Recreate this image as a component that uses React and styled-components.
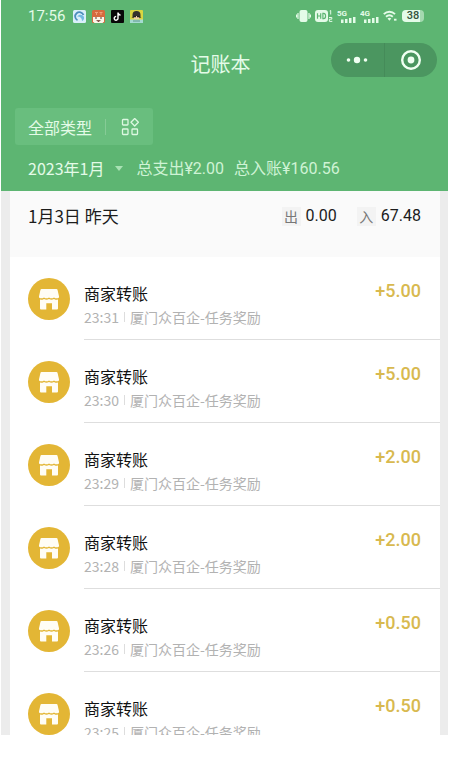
import React from "react";
import styled, { createGlobalStyle } from "styled-components";

const GlobalStyle = createGlobalStyle`
  * { box-sizing: border-box; }
  body {
    margin: 0;
    background: #ffffff;
    color: #1c1c1c;
    font-family: "Noto Sans CJK SC", sans-serif;
  }
  button { border: 0; padding: 0; background: none; color: inherit; font: inherit; cursor: pointer; }
  ul { margin: 0; padding: 0; list-style: none; }
  svg { display: block; flex: none; }
`;

const Screen = styled.div`
  display: flex;
  flex-direction: column;
  height: calc(100vh - 23px);
  margin: 0 7px 0 1px;
  overflow: hidden;
  background: #ececec;
`;

const Header = styled.header`
  flex: none;
  background: #5db572;
  color: #e4fbe8;
`;

const StatusBar = styled.div`
  display: flex;
  align-items: center;
  justify-content: space-between;
  height: 32px;
  padding: 0 24px 0 27px;
`;

const StatusGroup = styled.div`
  display: flex;
  align-items: center;
  gap: ${(p) => p.$gap}px;
`;

const Clock = styled.time`
  margin-right: 2px;
  font: 15px/20px Roboto, sans-serif;
`;

const Battery = styled.span`
  width: 22px;
  margin-left: 1px;
  border-radius: 4px;
  background: linear-gradient(90deg, #e4fbe8 84%, #a4d9b0 84%);
  color: #35533c;
  font: 500 11px/12px Roboto, sans-serif;
  text-align: center;
`;

const TitleBar = styled.div`
  display: grid;
  grid-template-columns: 1fr auto 1fr;
  align-items: center;
  height: 56px;
  padding: 0 11px;
`;

const Title = styled.h1`
  grid-column: 2;
  margin: 0;
  padding-top: 8px;
  padding-right: 8px;
  font-size: 20px;
  font-weight: 400;
  line-height: 28px;
`;

const Capsule = styled.div`
  display: flex;
  justify-self: end;
  width: 106px;
  height: 34px;
  border-radius: 17px;
  background: #4b9660;
`;

const CapsuleButton = styled.button`
  display: flex;
  flex: 1;
  align-items: center;
  justify-content: center;
  & + & { border-left: 1px solid #458b59; }
`;

const Filters = styled.div`
  padding: 20px 14px 0;
`;

const TypeButton = styled.button`
  display: flex;
  align-items: center;
  height: 37px;
  padding: 0 14px 0 13px;
  border-radius: 3px;
  background: #69be7e;
  font-size: 16px;
  line-height: 24px;
`;

const TypeLabel = styled.span`
  margin-right: 15px;
  padding-right: 13px;
  border-right: 1px solid #86cb96;
  line-height: 16px;
`;

const MonthRow = styled.div`
  display: flex;
  align-items: center;
  height: 46px;
  padding: 0 27px;
  font-size: 16px;
  line-height: 24px;
  white-space: nowrap;
`;

const MonthButton = styled.button`
  display: flex;
  align-items: center;
  gap: 11px;
  margin-right: 13px;
`;

const Total = styled.span`
  margin-right: 10px;
  color: #cff3d5;
`;

const Figure = styled.span`
  font-family: Roboto, sans-serif;
`;

const Ledger = styled.main`
  flex: 1;
  min-height: 0;
  margin: 0 8px 0 9px;
  overflow: hidden;
  background: #ffffff;
`;

const DayHeader = styled.div`
  display: flex;
  align-items: flex-start;
  justify-content: space-between;
  height: 66px;
  padding: 12px 19px 0 18px;
  background: #fafafa;
`;

const DayTitle = styled.h2`
  margin: 0;
  font-size: 17px;
  font-weight: 400;
  line-height: 26px;
`;

const DaySums = styled.div`
  display: flex;
  gap: 20px;
`;

const Sum = styled.div`
  display: flex;
  align-items: center;
  gap: 5px;
  font: 16px/26px Roboto, sans-serif;
`;

const SumTag = styled.span`
  width: 19px;
  background: #f3f3f3;
  color: #777777;
  font: 14px/19px "Noto Sans CJK SC", sans-serif;
  text-align: center;
`;

const Row = styled.li`
  display: flex;
  gap: 14px;
  height: 83px;
  padding-left: 18px;
`;

const ShopBadge = styled.span`
  display: flex;
  flex: none;
  align-items: center;
  justify-content: center;
  width: 42px;
  height: 42px;
  margin-top: 21px;
  border-radius: 50%;
  background: #e3b635;
`;

const RowBody = styled.div`
  display: flex;
  flex: 1;
  align-items: flex-start;
  justify-content: space-between;
  padding: 24px 19px 0 0;
  border-bottom: 1px solid #dedede;
`;

const Name = styled.div`
  font-size: 16px;
  line-height: 24px;
  color: #111111;
`;

const Detail = styled.div`
  display: flex;
  align-items: center;
  gap: 5px;
  color: #b2b2b2;
  font-size: 14px;
  line-height: 24px;
`;

const Divider = styled.span`
  width: 1px;
  height: 10px;
  background: #dddddd;
`;

const Amount = styled.div`
  color: #d8b94f;
  font: 500 18px/20px Roboto, sans-serif;
`;

const entries = [
  { time: "23:31", amount: "+5.00" },
  { time: "23:30", amount: "+5.00" },
  { time: "23:29", amount: "+2.00" },
  { time: "23:28", amount: "+2.00" },
  { time: "23:26", amount: "+0.50" },
  { time: "23:25", amount: "+0.50" },
];

const BrowserIcon = () => (
  <svg width="13" height="13" viewBox="0 0 13 13">
    <rect width="13" height="13" rx="1.5" fill="#d9effa" />
    <path d="M4.500 10.300A4.300 4.300 0 1 1 10.500 5" fill="none" stroke="#4b8dbd" strokeWidth="1.8" />
    <path d="M4.200 6.500C6 4 9.500 4.200 11 7c.4 2-.5 3.500-2 4 .2-2.500-1.500-4.500-4.800-4.500Z" fill="#73b9e2" />
  </svg>
);

const MascotIcon = () => (
  <svg width="13" height="13" viewBox="0 0 13 13">
    <rect width="13" height="13" rx="1.5" fill="#d66a3e" />
    <path d="M3 2.500h3M4.500 2v3M7.500 2.500h3M9 2v3" stroke="#f0a17a" />
    <path d="M1 7h11v4.500L10.500 13h-8L1 11.500Z" fill="#fbf5e8" />
    <path d="M3 8h2M8 8h2" stroke="#5b392d" strokeWidth="1.2" />
    <path d="M4 10.200h5L6.500 12Z" fill="#6b2a24" />
  </svg>
);

const MusicIcon = () => (
  <svg width="13" height="13" viewBox="0 0 13 13">
    <rect width="13" height="13" rx="1" fill="#080808" />
    <path d="M7 2.500v5.700A1.900 1.900 0 1 1 5.200 6.400M7 2.700c.2 1.500 1.100 2.300 2.600 2.400" fill="none" stroke="#ffffff" strokeWidth="1.4" />
  </svg>
);

const AvatarIcon = () => (
  <svg width="13" height="13" viewBox="0 0 13 13">
    <rect width="13" height="13" rx="1" fill="#d9d640" />
    <path d="M2.500 7V5a4 4 0 0 1 8 0v2l1 .8h-10Z" fill="#34332c" />
    <path d="M4 6h5v3H4Z" fill="#f0d3a6" />
    <path d="M3.500 6h2.500v1.300H3.500ZM7 6h2.500v1.300H7Z" fill="#24241f" />
    <path d="M0 9.500h13V13H0Z" fill="#a6dbd1" />
    <path d="M3 11h7" stroke="#5f968f" />
  </svg>
);

const VibrateIcon = () => (
  <svg width="15" height="14" viewBox="0 0 15 14" fill="none" stroke="#e4fbe8" strokeWidth="1.2">
    <rect x="3.500" y="1" width="8" height="12" rx="2" fill="#e4fbe8" stroke="none" />
    <path d="M2 4v6M13 4v6M.6 5.500v3M14.400 5.500v3" />
  </svg>
);

const HdIcon = () => (
  <svg width="18" height="14" viewBox="0 0 18 14" fill="none">
    <rect y="1" width="13" height="12" rx="3" fill="#e4fbe8" />
    <path d="M2.500 4.300v5.400M5.700 4.300v5.400M2.500 7h3.200M7.900 4.300v5.400h.8c2.500 0 2.500-5.400 0-5.400Z" stroke="#5db572" strokeWidth="1.200" />
    <path d="M14.700 2l1-.5v4M14 8.500h2.800v1.700h-2.400v2.200h2.900" stroke="#e4fbe8" />
  </svg>
);

const SignalText = styled.text`
  font: 700 8px Roboto, sans-serif;
  fill: #e4fbe8;
`;

const SignalIcon = ({ label }) => (
  <svg width="19" height="15" viewBox="0 0 19 15">
    <SignalText x="0" y="7">{label}</SignalText>
    <path d="M4 10.500h2.500V14H4ZM8 10h2.500v4H8ZM12 9h2.500v5H12ZM16 8h2.500v6H16Z" fill="#e4fbe8" />
  </svg>
);

const WifiIcon = () => (
  <svg width="14" height="12" viewBox="0 0 14 12" fill="none" stroke="#e4fbe8" strokeWidth="1.900">
    <path d="M.8 4.200c3.300-3.300 8-3.300 11.200 0M3 6.800c2-1.800 4.800-1.800 6.800 0" />
    <path d="M4.500 8.600c1.100-1 2.700-1 3.800 0L6.400 10.700Z" fill="#e4fbe8" stroke="none" />
    <path d="M11 9.700h2.500" />
  </svg>
);

const MoreIcon = () => (
  <svg width="22" height="8" viewBox="0 0 22 8" fill="#f0fff2">
    <circle cx="2.500" cy="4" r="1.800" />
    <circle cx="11" cy="4" r="3.200" />
    <circle cx="19.500" cy="4" r="1.800" />
  </svg>
);

const CloseIcon = () => (
  <svg width="22" height="22" viewBox="0 0 22 22">
    <circle cx="11" cy="11" r="8.800" fill="none" stroke="#f0fff2" strokeWidth="2.400" />
    <circle cx="11" cy="11" r="3.400" fill="#f0fff2" />
  </svg>
);

const CategoryIcon = () => (
  <svg width="18" height="18" viewBox="0 0 18 18" fill="none" stroke="#dcf8e1" strokeWidth="1.300">
    <rect x="1.500" y="1.500" width="5.500" height="5.500" rx=".7" />
    <path d="M13.700.5 17.400 4.300l-3.700 3.700L10 4.300Z" strokeLinejoin="round" />
    <rect x="1.500" y="11" width="5.500" height="5.500" rx=".7" />
    <rect x="11" y="11" width="5.500" height="5.500" rx=".7" />
  </svg>
);

const CaretIcon = () => (
  <svg width="8" height="5" viewBox="0 0 8 5">
    <path d="M0 0h8L4 5Z" fill="#a9e2b4" />
  </svg>
);

const ShopIcon = () => (
  <svg width="22" height="22" viewBox="0 0 22 22" fill="#fffdf5">
    <path d="M3.500 1h15q.8 0 1 .8l1.500 6.400v1.300q-2.500 1.700-5 0-2.500 1.700-5 0-2.500 1.700-5 0-2.500 1.700-5 0V8.200l1.500-6.400q.2-.8 1-.8Z" />
    <path d="M2 11.600q2 .5 4-.7 2.500 1.600 5 0 2.500 1.600 5 0 2 1.200 4 .7v8.900q0 1-1 1h-5v-6.300H8.300v6.300H3q-1 0-1-1Z" />
  </svg>
);

export default function App() {
  return (
    <>
      <GlobalStyle />
      <Screen>
        <Header>
          <StatusBar>
            <StatusGroup $gap={6}>
              <Clock>17:56</Clock>
              <BrowserIcon />
              <MascotIcon />
              <MusicIcon />
              <AvatarIcon />
            </StatusGroup>
            <StatusGroup $gap={4}>
              <VibrateIcon />
              <HdIcon />
              <SignalIcon label="5G" />
              <SignalIcon label="4G" />
              <WifiIcon />
              <Battery>38</Battery>
            </StatusGroup>
          </StatusBar>
          <TitleBar>
            <Title>记账本</Title>
            <Capsule>
              <CapsuleButton aria-label="更多"><MoreIcon /></CapsuleButton>
              <CapsuleButton aria-label="关闭"><CloseIcon /></CapsuleButton>
            </Capsule>
          </TitleBar>
          <Filters>
            <TypeButton>
              <TypeLabel>全部类型</TypeLabel>
              <CategoryIcon />
            </TypeButton>
          </Filters>
          <MonthRow>
            <MonthButton>
              2023年1月
              <CaretIcon />
            </MonthButton>
            <Total>总支出<Figure>¥2.00</Figure></Total>
            <Total>总入账<Figure>¥160.56</Figure></Total>
          </MonthRow>
        </Header>
        <Ledger>
          <DayHeader>
            <DayTitle>1月3日 昨天</DayTitle>
            <DaySums>
              <Sum><SumTag>出</SumTag>0.00</Sum>
              <Sum><SumTag>入</SumTag>67.48</Sum>
            </DaySums>
          </DayHeader>
          <ul>
            {entries.map((entry) => (
              <Row key={entry.time}>
                <ShopBadge><ShopIcon /></ShopBadge>
                <RowBody>
                  <div>
                    <Name>商家转账</Name>
                    <Detail>
                      <span>{entry.time}</span>
                      <Divider />
                      <span>厦门众百企-任务奖励</span>
                    </Detail>
                  </div>
                  <Amount>{entry.amount}</Amount>
                </RowBody>
              </Row>
            ))}
          </ul>
        </Ledger>
      </Screen>
    </>
  );
}
